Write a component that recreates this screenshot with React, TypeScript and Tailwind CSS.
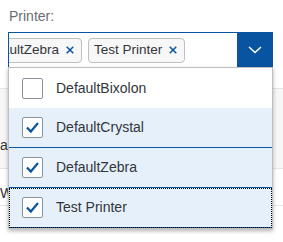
import { useState } from 'react'

type Printer = { name: string; checked: boolean }

const printers: Printer[] = [
  { name: 'DefaultBixolon', checked: false },
  { name: 'DefaultCrystal', checked: true },
  { name: 'DefaultZebra', checked: true },
  { name: 'Test Printer', checked: true },
]

function CloseIcon() {
  return (
    <svg width="8" height="8" viewBox="0 0 8 8" fill="none">
      <path d="M0.7 0.7l6.6 6.6M7.3 0.7L0.7 7.3" stroke="#0854a0" strokeWidth="1.5" />
    </svg>
  )
}

function Token({ label }: { label: string }) {
  return (
    <span className="flex h-[25px] shrink-0 items-center gap-[7px] rounded-[4px] border border-[#bfbfbf] bg-[#f7f7f7] pl-[5px] pr-[7px] text-[13.5px] leading-none text-[#32363a]">
      {label}
      <CloseIcon />
    </span>
  )
}

function Checkbox({ checked }: { checked: boolean }) {
  return (
    <span className="flex h-[21px] w-[21px] shrink-0 items-center justify-center rounded-[2px] border border-[#89919a] bg-white">
      {checked && (
        <svg width="15" height="13" viewBox="0 0 15 13" fill="none">
          <path d="M2 6.5l3.8 4L13 2" stroke="#0854a0" strokeWidth="2.2" />
        </svg>
      )}
    </span>
  )
}

export default function App() {
  const [items] = useState(printers)

  return (
    <div className="relative h-[242px] w-[283px] overflow-hidden bg-white font-['Liberation_Sans',Arial,sans-serif]">
      <div className="h-[32px] pl-[9px] pt-[7px] text-[14px] leading-[18px] text-[#6a6d70]">Printer:</div>

      <div className="ml-[8px] flex h-[36px] w-[265px] border border-[#0854a0] bg-white">
        <div className="flex flex-1 items-center overflow-hidden">
          <div className="-ml-[34px] flex items-center gap-[6px]">
            <Token label="DefaultZebra" />
            <Token label="Test Printer" />
          </div>
        </div>
        <button className="flex h-full w-[35px] items-center justify-center bg-[#0854a0]">
          <svg width="14" height="8" viewBox="0 0 14 8" fill="none">
            <path d="M1 1l6 5.5L13 1" stroke="white" strokeWidth="1.5" />
          </svg>
        </button>
      </div>

      {/* table rows behind the open list */}
      <div className="h-[21px] border-b border-[#e5e5e5]" />
      <div className="h-[80px] border-b border-[#e5e5e5] bg-[#f7f7f7] pt-[47px] text-[14px] leading-[18px] text-[#32363a]">
        a
      </div>
      <div className="h-[37px] border-b border-[#e5e5e5] pt-[15px] text-[14px] leading-[18px] text-[#32363a]">
        Wi
      </div>

      <div className="absolute left-[8px] top-[67px] w-[265px] border border-[#bfbfbf] bg-white shadow-[0_2px_4px_rgba(0,0,0,0.3)]">
        {items.map((p, i) => (
          <div
            key={p.name}
            className={
              'flex h-[40px] items-center gap-[13px] pl-[13px] text-[14px] text-[#32363a] ' +
              (p.checked ? 'border-b border-[#0854a0] bg-[#e5f0fa] ' : '') +
              (i === items.length - 1 ? 'outline-1 -outline-offset-1 outline-dotted outline-black' : '')
            }
          >
            <Checkbox checked={p.checked} />
            <span>{p.name}</span>
          </div>
        ))}
      </div>
    </div>
  )
}
